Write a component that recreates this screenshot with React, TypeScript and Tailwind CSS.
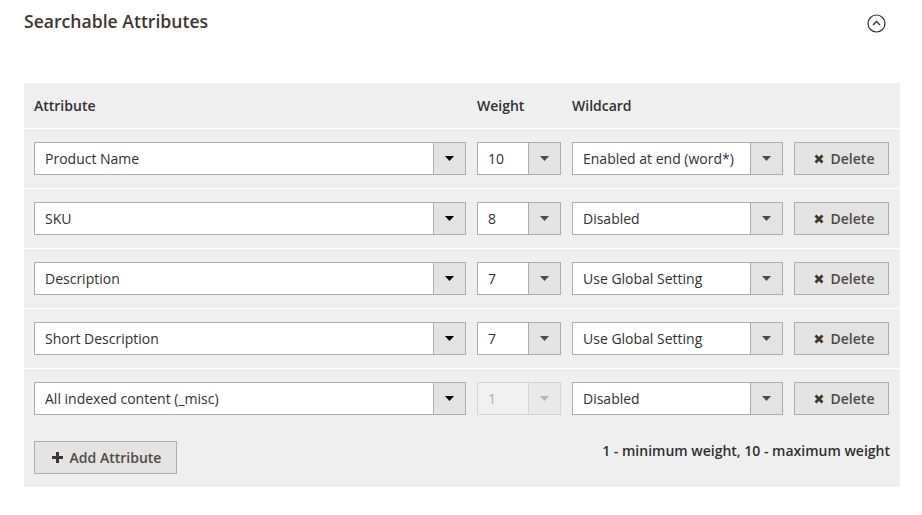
const rows = [
  { attr: 'Product Name', weight: '10', wildcard: 'Enabled at end (word*)', disabled: false },
  { attr: 'SKU', weight: '8', wildcard: 'Disabled', disabled: false },
  { attr: 'Description', weight: '7', wildcard: 'Use Global Setting', disabled: false },
  { attr: 'Short Description', weight: '7', wildcard: 'Use Global Setting', disabled: false },
  { attr: 'All indexed content (_misc)', weight: '1', wildcard: 'Disabled', disabled: true },
]

function Caret({ color }: { color: string }) {
  return (
    <svg width="9" height="5" viewBox="0 0 9 5">
      <path d="M0 0 L9 0 L4.5 5 Z" fill={color} />
    </svg>
  )
}

function FakeSelect({ value, width, dark, disabled }: { value: string; width: string; dark?: boolean; disabled?: boolean }) {
  return (
    <div
      className={`flex h-[33px] ${width} border ${disabled ? 'border-[#d4d4d4] bg-[#f0f0f0] text-[#adadad]' : 'border-[#adadad] bg-white text-[#303030]'}`}
    >
      <div className="flex-1 flex items-center pl-[10px] text-[14px] whitespace-nowrap overflow-hidden">{value}</div>
      <div
        className={`w-[32px] flex items-center justify-center border-l ${disabled ? 'border-[#d4d4d4] bg-[#e9e9e9]' : 'border-[#adadad] bg-[#e3e3e3]'}`}
      >
        <Caret color={disabled ? '#b5b5b5' : dark ? '#000000' : '#514943'} />
      </div>
    </div>
  )
}

export default function App() {
  return (
    <div className="w-[922px] h-[515px] bg-white" style={{ fontFamily: '"Open Sans", "Liberation Sans", sans-serif' }}>
      {/* Title */}
      <div className="flex items-center justify-between pl-6 pr-[36px] pt-[2px] h-[40px]">
        <h2 className="text-[17.6px] font-semibold text-[#41362f]">Searchable Attributes</h2>
        <svg width="19" height="19" viewBox="0 0 19 19" className="mt-[4px]">
          <circle cx="9.5" cy="9.5" r="8.5" fill="none" stroke="#303030" strokeWidth="1.2" />
          <path d="M6 11 L9.5 7.5 L13 11" fill="none" stroke="#303030" strokeWidth="1.3" />
        </svg>
      </div>

      {/* Table */}
      <div className="mx-6 mt-[43px] w-[876px] bg-[#efefef]">
        <div className="grid grid-cols-[432px_84px_211px_95px] gap-x-[11px] px-[10px] h-[45px] items-center text-[14px] font-semibold text-[#303030]">
          <div>Attribute</div>
          <div>Weight</div>
          <div>Wildcard</div>
          <div></div>
        </div>

        {rows.map((r) => (
          <div
            key={r.attr}
            className="grid grid-cols-[432px_84px_211px_95px] gap-x-[11px] px-[10px] h-[60px] items-center border-t border-white"
          >
            <FakeSelect value={r.attr} width="w-[432px]" dark />
            <FakeSelect value={r.weight} width="w-[84px]" disabled={r.disabled} />
            <FakeSelect value={r.wildcard} width="w-[211px]" />
            <button className="h-[33px] w-[95px] flex items-center justify-center gap-[7px] pl-[5px] border border-[#adadad] bg-[#e3e3e3] text-[14px] font-semibold text-[#514943]">
              <svg width="10" height="10" viewBox="0 0 10 10">
                <path d="M1.5 1.5 L8.5 8.5 M8.5 1.5 L1.5 8.5" stroke="#41362f" strokeWidth="2.8" strokeLinecap="butt" />
              </svg>
              Delete
            </button>
          </div>
        ))}

        <div className="flex items-start justify-between px-[10px] pt-[13px] pb-[13px]">
          <button className="h-[33px] w-[143px] flex items-center justify-center gap-[7px] pl-[2px] border border-[#adadad] bg-[#e3e3e3] text-[14px] font-semibold text-[#514943]">
            <svg width="11" height="11" viewBox="0 0 11 11">
              <path d="M4 0 H7 V4 H11 V7 H7 V11 H4 V7 H0 V4 H4 Z" fill="#41362f" />
            </svg>
            Add Attribute
          </button>
          <div className="text-[14px] font-semibold text-[#303030] -mt-[1px]">1 - minimum weight, 10 - maximum weight</div>
        </div>
      </div>
    </div>
  )
}
